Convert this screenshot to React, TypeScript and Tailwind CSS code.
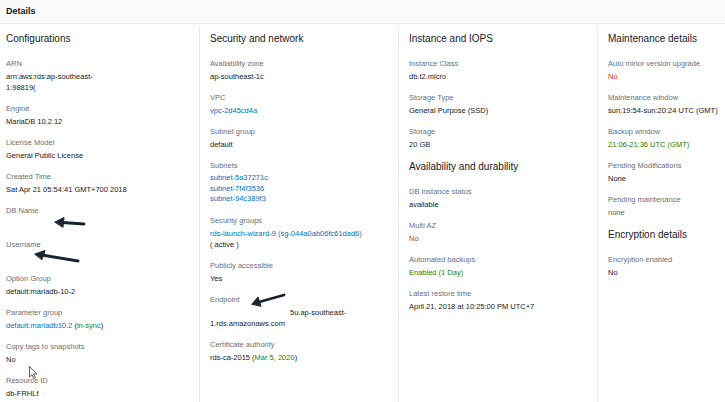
import React from 'react';

type Field = { label: string; value: React.ReactNode };

const link = 'text-[#0073bb]';
const green = 'text-[#1d8102]';
const red = 'text-[#d13212]';

function Heading({ children, first }: { children: React.ReactNode; first?: boolean }) {
  return (
    <h2 className={`text-[10px] leading-[16px] text-[#16191f] mb-[10px] ${first ? '' : 'mt-[9px]'}`}>
      {children}
    </h2>
  );
}

function Item({ label, value }: Field) {
  return (
    <div className="mb-[9px]">
      <div className="text-[7.5px] leading-[13px] text-[#687078]">{label}</div>
      <div className="mt-[1px] text-[7.5px] leading-[11px] text-[#16191f] min-h-[11px]">{value}</div>
    </div>
  );
}

export default function App() {
  return (
    <div className="relative h-[402px] w-[725px] overflow-hidden bg-white flex flex-col" style={{ fontFamily: '"Liberation Sans", Arial, sans-serif' }}>
      <div className="h-[24px] shrink-0 bg-[#fafafa] border-b border-[#eaeded] px-[6px] flex items-center">
        <span className="text-[9px] font-bold text-[#16191f]">Details</span>
      </div>

      <div className="flex-1 mt-[2px] grid grid-cols-[200px_199px_199px_1fr]">
        <div className="border-r border-[#eaeded] pl-[6px] pt-[5px]">
          <Heading first>Configurations</Heading>
          <Item label="ARN" value={<>arn:aws:rds:ap-southeast-<br />1:98819(</>} />
          <Item label="Engine" value="MariaDB 10.2.12" />
          <Item label="License Model" value="General Public License" />
          <Item label="Created Time" value="Sat Apr 21 05:54:41 GMT+700 2018" />
          <Item label="DB Name" value="" />
          <Item label="Username" value="" />
          <Item label="Option Group" value="default:mariadb-10-2" />
          <Item
            label="Parameter group"
            value={
              <>
                <span className={link}>default.mariadb10.2</span> (<span className={green}>in-sync</span>)
              </>
            }
          />
          <Item label="Copy tags to snapshots" value="No" />
          <Item label="Resource ID" value="db-FRHLf" />
        </div>

        <div className="border-r border-[#eaeded] pl-[10px] pt-[5px]">
          <Heading first>Security and network</Heading>
          <Item label="Availability zone" value="ap-southeast-1c" />
          <Item label="VPC" value={<span className={link}>vpc-2d45cd4a</span>} />
          <Item label="Subnet group" value="default" />
          <Item
            label="Subnets"
            value={
              <div className={`${link} leading-[10.5px]`}>
                <div>subnet-5a37271c</div>
                <div>subnet-7f4f3536</div>
                <div>subnet-94c389f3</div>
              </div>
            }
          />
          <Item
            label="Security groups"
            value={
              <>
                <div className={link}>rds-launch-wizard-9 (sg-044a0ab06fc61dad6)</div>
                <div>( active )</div>
              </>
            }
          />
          <Item label="Publicly accessible" value="Yes" />
          <Item
            label="Endpoint"
            value={
              <>
                <div className="pl-[80px]">5u.ap-southeast-</div>
                <div>1.rds.amazonaws.com</div>
              </>
            }
          />
          <Item
            label="Certificate authority"
            value={
              <>
                rds-ca-2015 (<span className={green}>Mar 5, 2020</span>)
              </>
            }
          />
        </div>

        <div className="border-r border-[#eaeded] pl-[10px] pt-[5px]">
          <Heading first>Instance and IOPS</Heading>
          <Item label="Instance Class" value="db.t2.micro" />
          <Item label="Storage Type" value="General Purpose (SSD)" />
          <Item label="Storage" value="20 GB" />
          <Heading>Availability and durability</Heading>
          <Item label="DB instance status" value="available" />
          <Item label="Multi AZ" value={<span className={red}>No</span>} />
          <Item label="Automated backups" value={<span className={green}>Enabled (1 Day)</span>} />
          <Item label="Latest restore time" value="April 21, 2018 at 10:25:00 PM UTC+7" />
        </div>

        <div className="pl-[10px] pt-[5px]">
          <Heading first>Maintenance details</Heading>
          <Item label="Auto minor version upgrade" value={<span className={red}>No</span>} />
          <Item label="Maintenance window" value="sun:19:54-sun:20:24 UTC (GMT)" />
          <Item label="Backup window" value={<span className={green}>21:06-21:36 UTC (GMT)</span>} />
          <Item label="Pending Modifications" value="None" />
          <Item label="Pending maintenance" value={<span className="text-[#545b64]">none</span>} />
          <Heading>Encryption details</Heading>
          <Item label="Encryption enabled" value="No" />
        </div>
      </div>

      {/* annotation arrows + cursor drawn over the screenshot */}
      <svg className="pointer-events-none absolute inset-0" width="725" height="402">
        <g stroke="#1b2330" strokeWidth="2.8" strokeLinecap="round" fill="#1b2330">
          <line x1="84" y1="224" x2="62" y2="222.5" />
          <polygon points="55,222 64,217.5 63,227" strokeWidth="1" />
          <line x1="78" y1="261" x2="42" y2="255" />
          <polygon points="35,254 45,250.5 42,259.5" strokeWidth="1" />
          <line x1="284" y1="295" x2="259" y2="302" />
          <polygon points="252,304 258,297 261,306" strokeWidth="1" />
        </g>
        <path
          d="M29.5 366.5 L29.5 377 L32 374.6 L33.8 378.6 L35.4 377.9 L33.7 374 L37 374 Z"
          fill="#fff"
          stroke="#333"
          strokeWidth="0.8"
          strokeLinejoin="round"
        />
      </svg>
    </div>
  );
}
